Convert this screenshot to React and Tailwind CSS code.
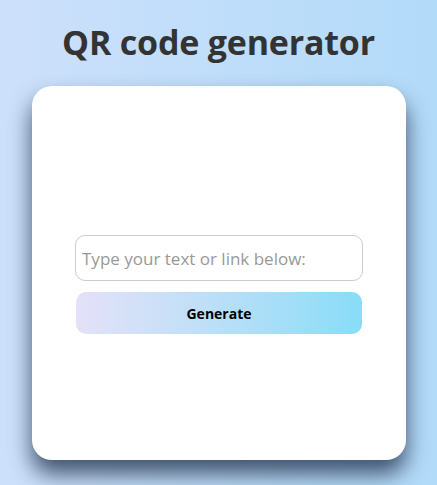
export default function App() {
  return (
    <div className="min-h-screen w-full bg-gradient-to-r from-[#cde0fb] to-[#b2dbf9] flex flex-col items-center pt-[21px] font-['Open_Sans',sans-serif]">
      <h1 className="text-[34px] leading-[42px] font-bold text-[#333] tracking-[-0.2px]">QR code generator</h1>

      {/* Card */}
      <div className="mt-[23px] w-[374px] h-[374px] bg-white rounded-[20px] shadow-[0_14px_22px_rgba(20,35,60,0.75)] flex flex-col items-center pt-[149px] pl-px">
        <input
          type="text"
          placeholder="Type your text or link below:"
          className="w-[288px] h-[46px] border border-[#ccc] rounded-[10px] px-[6px] text-[17px] text-[#333] placeholder:text-[#999] outline-none font-['Open_Sans',sans-serif]"
        />
        <button className="mt-[11px] w-[286px] h-[42px] rounded-[10px] bg-gradient-to-r from-[#e4e1f8] to-[#88dcf7] text-[14px] font-bold text-black">
          Generate
        </button>
      </div>
    </div>
  )
}
